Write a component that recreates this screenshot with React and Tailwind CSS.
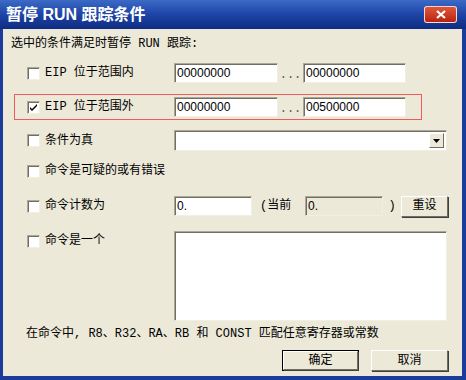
import React from 'react';

const FONT = { fontFamily: '"Liberation Mono", "Noto Sans CJK SC", monospace' };
const SANS = { fontFamily: '"Liberation Sans", "Noto Sans CJK SC", sans-serif' };

const Check = ({ checked }) => (
  <span className="w-[13px] h-[13px] shrink-0 bg-white border border-[#aca899] border-b-[#f1efe2] border-r-[#f1efe2] shadow-[inset_1px_1px_0_#716f64] flex items-center justify-center">
    {checked && (
      <svg width="9" height="9" viewBox="0 0 9 9">
        <path d="M1 4 L3 6 L8 1 L8 3 L3 8 L1 6 Z" fill="#000" />
      </svg>
    )}
  </span>
);

const Field = ({ value, w, disabled }) => (
  <div
    className={`h-[20px] ${w} border border-[#aca899] border-b-[#f1efe2] border-r-[#f1efe2] shadow-[inset_1px_1px_0_#716f64] flex items-center pl-[2px] text-[12px] text-black ${disabled ? 'bg-[#ece9d8]' : 'bg-white'}`}
    style={SANS}
  >
    {value}
  </div>
);

const Label = ({ checked, children }) => (
  <div className="w-[147px] flex items-center gap-[5px] shrink-0">
    <Check checked={checked} />
    <span className="text-[12px] text-black whitespace-nowrap">{children}</span>
  </div>
);

const Btn = ({ children, def, w = 'w-[77px]' }) => (
  <div className={`${w} h-[21px] ${def ? 'border border-black' : ''}`}>
    <div className="h-full bg-[#ece9d8] border border-white border-b-[#716f64] border-r-[#716f64] shadow-[1px_1px_0_#404040] flex items-center justify-center text-[12px] text-black">
      {children}
    </div>
  </div>
);

export default function App() {
  return (
    <div className="w-[466px] h-[380px] bg-[#1c3c9c] flex flex-col overflow-hidden" style={FONT}>
      <div className="h-[29px] shrink-0 bg-gradient-to-b from-[#3d6ac6] via-[#1d44a6] to-[#0f2c82] flex items-center pl-[6px] pr-[9px]">
        <span className="text-white text-[16px] font-bold" style={SANS}>暂停 RUN 跟踪条件</span>
        <div className="ml-auto w-[33px] h-[17px] rounded-[3px] border border-white/80 bg-gradient-to-b from-[#e0563a] to-[#b8210c] flex items-center justify-center">
          <svg width="10" height="9" viewBox="0 0 10 9">
            <path d="M1 1 L9 8 M9 1 L1 8" stroke="#fff" strokeWidth="2.2" />
          </svg>
        </div>
      </div>
      <div className="flex-1 ml-[3px] mr-[4px] mb-[4px] bg-[#ece9d8] flex flex-col">
        <div className="text-[12px] text-black pl-[8px] mt-[8px] h-[14px] leading-[14px]">选中的条件满足时暂停 RUN 跟踪:</div>

        <div className="flex items-center pl-[24px] mt-[12px] h-[20px]">
          <Label>EIP 位于范围内</Label>
          <Field value="00000000" w="w-[104px]" />
          <span className="w-[25px] text-center text-[12px] text-[#555] pt-[4px]">...</span>
          <Field value="00000000" w="w-[103px]" />
        </div>

        <div className="ml-[11px] mt-[11px] w-[408px] h-[26px] border border-[#f05a5a] flex items-center pl-[12px]">
          <Label checked>EIP 位于范围外</Label>
          <Field value="00000000" w="w-[104px]" />
          <span className="w-[25px] text-center text-[12px] text-[#555] pt-[4px]">...</span>
          <Field value="00500000" w="w-[103px]" />
        </div>

        <div className="flex items-center pl-[24px] mt-[10px] h-[21px]">
          <Label>条件为真</Label>
          <div className="w-[273px] h-[21px] bg-white border border-[#aca899] border-b-[#f1efe2] border-r-[#f1efe2] shadow-[inset_1px_1px_0_#716f64] flex justify-end p-[2px]">
            <div className="w-[15px] h-full bg-[#ece9d8] border border-white border-b-[#716f64] border-r-[#716f64] flex items-center justify-center">
              <svg width="7" height="4" viewBox="0 0 7 4"><path d="M0 0 H7 L3.5 4 Z" fill="#000" /></svg>
            </div>
          </div>
        </div>

        <div className="flex items-center pl-[24px] mt-[12px] h-[16px]">
          <Label>命令是可疑的或有错误</Label>
        </div>

        <div className="flex items-center pl-[24px] mt-[17px] h-[20px]">
          <Label>命令计数为</Label>
          <Field value="0." w="w-[78px]" />
          <span className="ml-[8px] w-[45px] text-[12px] text-black">(当前</span>
          <Field value="0." w="w-[78px]" disabled />
          <span className="w-[18px] text-center text-[12px] text-black">)</span>
          <Btn w="w-[47px]">重设</Btn>
        </div>

        <div className="flex items-start pl-[24px] mt-[15px]">
          <div className="pt-[1px]"><Label>命令是一个</Label></div>
          <div className="w-[273px] h-[90px] bg-white border border-[#aca899] border-b-[#f1efe2] border-r-[#f1efe2] shadow-[inset_1px_1px_0_#716f64]" />
        </div>

        <div className="text-[12px] text-black pl-[23px] mt-[5px] h-[16px] leading-[16px] whitespace-nowrap">在命令中, R8、R32、RA、RB 和 CONST 匹配任意寄存器或常数</div>

        <div className="flex justify-end gap-[12px] pr-[14px] mt-[8px]">
          <Btn def>确定</Btn>
          <Btn>取消</Btn>
        </div>
      </div>
    </div>
  );
}
